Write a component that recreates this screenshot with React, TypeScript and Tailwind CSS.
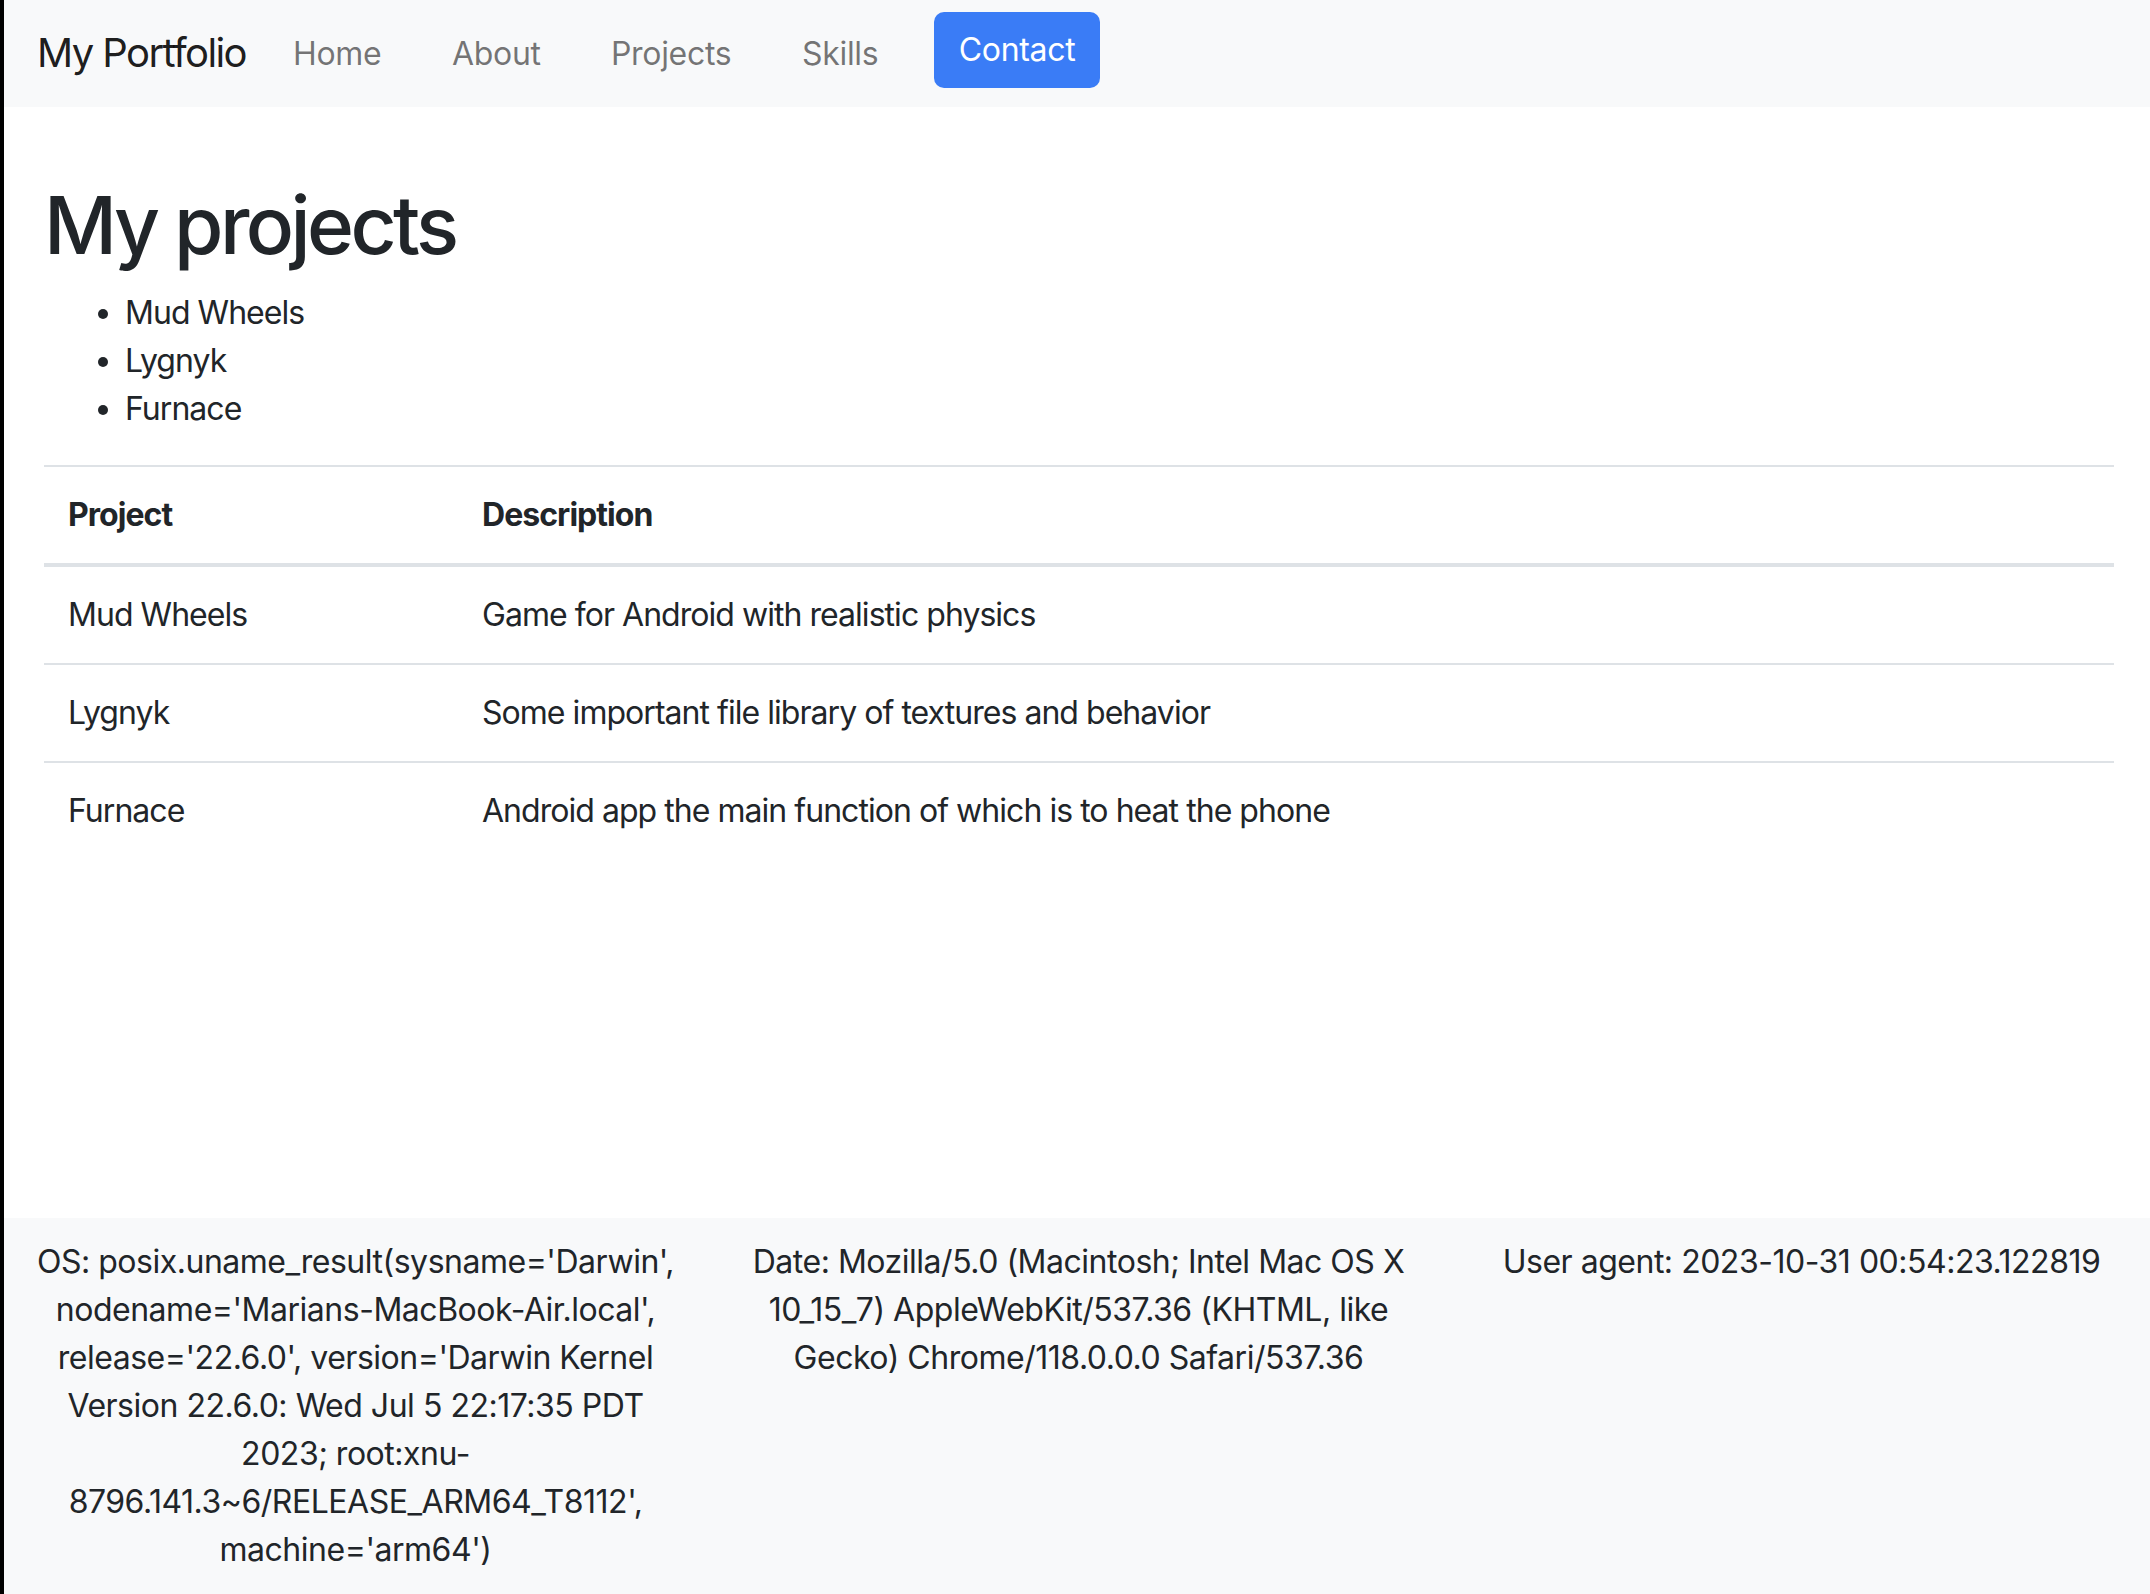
const links = [
  { label: 'Home', width: 'w-[159px]' },
  { label: 'About', width: 'w-[159px]' },
  { label: 'Projects', width: 'w-[191px]' },
  { label: 'Skills', width: 'w-[132px]' },
]

const projects = [
  { name: 'Mud Wheels', description: 'Game for Android with realistic physics' },
  { name: 'Lygnyk', description: 'Some important file library of textures and behavior' },
  { name: 'Furnace', description: 'Android app the main function of which is to heat the phone' },
]

function Navbar() {
  return (
    <nav className="flex h-[107px] items-start bg-[#f8f9fa] pl-[33px]">
      <a className="mt-[23px] w-[256px] text-[40px] leading-[60px] tracking-[-0.04em] text-black/90">My Portfolio</a>
      {links.map(link => (
        <a key={link.label} className={`mt-[30px] text-[32px] leading-[48px] text-black/55 ${link.width}`}>
          {link.label}
        </a>
      ))}
      <button
        type="button"
        className="mt-[12px] h-[76px] w-[166px] rounded-[10px] bg-[#3a7cf6] text-[32px] leading-[48px] text-white"
      >
        Contact
      </button>
    </nav>
  )
}

function ProjectsTable() {
  return (
    <table className="w-full border-collapse text-left text-[32px] leading-[48px] tracking-[-0.03em]">
      <thead>
        <tr>
          <th className="w-[414px] border-t-2 border-b-4 border-[#dee2e6] p-[24px] align-bottom font-bold">Project</th>
          <th className="border-t-2 border-b-4 border-[#dee2e6] p-[24px] align-bottom font-bold">Description</th>
        </tr>
      </thead>
      <tbody>
        {projects.map(p => (
          <tr key={p.name}>
            <td className="border-t-2 border-[#dee2e6] p-[24px]">{p.name}</td>
            <td className="border-t-2 border-[#dee2e6] p-[24px]">{p.description}</td>
          </tr>
        ))}
      </tbody>
    </table>
  )
}

function Footer() {
  return (
    <footer className="overflow-hidden bg-[#f8f9fa] py-[20px] text-[32px] leading-[48px] tracking-[-0.015em]">
      <div className="-ml-[10px] grid w-[2169px] grid-cols-3 text-center">
        <p className="px-[34px]">
          OS: posix.uname_result(sysname='Darwin', nodename='Marians-MacBook-Air.local', release='22.6.0',
          version='Darwin Kernel Version 22.6.0: Wed Jul 5 22:17:35 PDT 2023;
          root:xnu-8796.141.3~6/RELEASE_ARM64_T8112', machine='arm64')
        </p>
        <p className="px-[34px]">
          Date: Mozilla/5.0 (Macintosh; Intel Mac OS X 10_15_7) AppleWebKit/537.36 (KHTML, like Gecko)
          Chrome/118.0.0.0 Safari/537.36
        </p>
        <p className="px-[34px]">User agent: 2023-10-31 00:54:23.122819</p>
      </div>
    </footer>
  )
}

export default function App() {
  return (
    <div className="flex min-h-[1594px] flex-col overflow-hidden border-l-4 border-black bg-white font-[Inter,'Noto_Sans',sans-serif] tracking-[-0.02em] text-[#212529]">
      <Navbar />
      <main className="flex-1 pl-[40px] pr-[36px] pt-[70px]">
        <h1 className="mb-[16px] text-[80px] font-medium leading-[96px] tracking-[-0.045em]">My projects</h1>
        <ul className="mb-[32px] list-disc pl-[81px] text-[32px] leading-[48px] tracking-[-0.03em]">
          {projects.map(p => (
            <li key={p.name}>{p.name}</li>
          ))}
        </ul>
        <ProjectsTable />
      </main>
      <Footer />
    </div>
  )
}
